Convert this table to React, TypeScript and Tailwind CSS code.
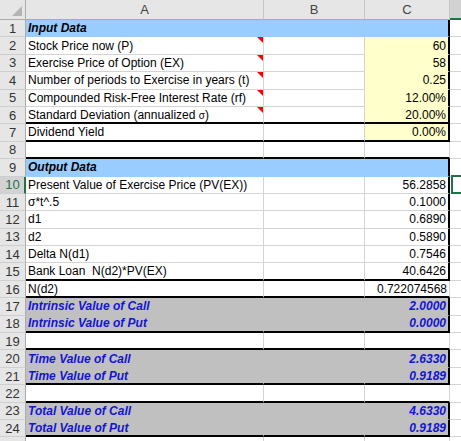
import React from "react";

type Kind = "title" | "input" | "plain" | "result" | "blank";

interface SheetRow {
  n: number;
  label?: React.ReactNode;
  value?: string;
  kind: Kind;
  note?: boolean;
  edge?: boolean; // thick right edge on column C
  rule?: boolean; // thick rule under the row
  hideNumber?: boolean;
}

const rows: SheetRow[] = [
  { n: 1, label: "Input Data", kind: "title", edge: true },
  { n: 2, label: "Stock Price now (P)", value: "60", kind: "input", note: true, edge: true },
  { n: 3, label: "Exercise Price of Option (EX)", value: "58", kind: "input", note: true, edge: true },
  { n: 4, label: "Number of periods to Exercise in years (t)", value: "0.25", kind: "input", note: true, edge: true },
  { n: 5, label: "Compounded Risk-Free Interest Rate (rf)", value: "12.00%", kind: "input", note: true, edge: true },
  {
    n: 6,
    label: (
      <>
        Standard Deviation (annualized <span className="text-[10px]">σ</span>)
      </>
    ),
    value: "20.00%",
    kind: "input",
    note: true,
    edge: true,
    rule: true,
  },
  { n: 7, label: "Dividend Yield", value: "0.00%", kind: "input", edge: true, rule: true },
  { n: 8, kind: "blank", rule: true },
  { n: 9, label: "Output Data", kind: "title", edge: true },
  { n: 10, label: "Present Value of Exercise Price (PV(EX))", value: "56.2858", kind: "plain", edge: true },
  { n: 11, label: "σ*t^.5", value: "0.1000", kind: "plain", edge: true },
  { n: 12, label: "d1", value: "0.6890", kind: "plain", edge: true },
  { n: 13, label: "d2", value: "0.5890", kind: "plain", edge: true },
  { n: 14, label: "Delta N(d1)", value: "0.7546", kind: "plain", edge: true },
  { n: 15, label: "Bank Loan  N(d2)*PV(EX)", value: "40.6426", kind: "plain", edge: true, rule: true },
  { n: 16, label: "N(d2)", value: "0.722074568", kind: "plain", rule: true },
  { n: 17, label: "Intrinsic Value of Call", value: "2.0000", kind: "result", edge: true },
  { n: 18, label: "Intrinsic Value of Put", value: "0.0000", kind: "result", edge: true, rule: true },
  { n: 19, kind: "blank", rule: true },
  { n: 20, label: "Time Value of Call", value: "2.6330", kind: "result", edge: true },
  { n: 21, label: "Time Value of Put", value: "0.9189", kind: "result", edge: true, rule: true },
  { n: 22, kind: "blank", rule: true },
  { n: 23, label: "Total Value of Call", value: "4.6330", kind: "result", edge: true },
  { n: 24, label: "Total Value of Put", value: "0.9189", kind: "result", edge: true, rule: true },
  { n: 25, kind: "blank", hideNumber: true },
];

const cols = "grid grid-cols-[26px_238px_101px_85px_11px]";

function fill(kind: Kind, isC: boolean) {
  if (kind === "title") return "bg-[#99ccff] border-transparent";
  if (kind === "result") return "bg-[#c0c0c0] border-transparent";
  if (kind === "input" && isC) return "bg-[#ffffcc] border-transparent";
  return "bg-white border-[#d4d4d4]";
}

function SheetRowView({ row }: { row: SheetRow }) {
  const selected = row.n === 10;
  const rule = row.rule ? "border-b-2 border-b-black" : "";
  const text =
    row.kind === "title"
      ? "font-bold italic text-black"
      : row.kind === "result"
        ? "font-bold italic text-[#1414d4]"
        : "text-black";

  return (
    <div className={`${cols} h-[17.4px]`}>
      <div
        className={
          selected
            ? "flex items-center justify-center border-b border-r-2 border-b-[#cfcfcf] border-r-[#217346] bg-[#d2d2d2] pl-px text-[13px] text-[#217346]"
            : "flex items-center justify-center border-b border-r border-b-[#cfcfcf] border-r-[#ababab] bg-[#e6e6e6] text-[13px] text-[#333]"
        }
      >
        {row.hideNumber ? null : row.n}
      </div>
      <div
        className={`relative flex items-center whitespace-pre border-b border-r pl-[2px] ${fill(row.kind, false)} ${rule} ${text}`}
      >
        <span className="relative z-10">{row.label}</span>
        {row.note && (
          <span className="absolute right-0 top-0 h-0 w-0 border-l-[6px] border-t-[6px] border-l-transparent border-t-[#ff0000]" />
        )}
      </div>
      <div className={`border-b border-r ${fill(row.kind, false)} ${rule}`} />
      <div
        className={`flex items-center justify-end border-b pr-[2px] ${fill(row.kind, true)} ${rule} ${
          row.edge ? "border-r-2 border-r-black" : "border-r"
        } ${text}`}
      >
        {row.value}
      </div>
      <div className="relative border-b border-[#d4d4d4] bg-white">
        {selected && (
          <div className="absolute -top-[2px] left-[1px] h-[19px] w-[20px] border-2 border-[#217346]" />
        )}
      </div>
    </div>
  );
}

export default function App() {
  return (
    <div
      className="h-[441px] w-[461px] overflow-hidden bg-white text-[12px] leading-none"
      style={{ fontFamily: '"Liberation Sans", Arial, sans-serif' }}
    >
      <div className={`${cols} h-[20px] text-[13px] text-[#444]`}>
        <div className="relative border-b border-r border-[#ababab] bg-[#e6e6e6]">
          <svg className="absolute bottom-[3px] right-[3px]" width="10" height="10" viewBox="0 0 10 10">
            <polygon points="10,0 10,10 0,10" fill="#b4b4b4" />
          </svg>
        </div>
        <div className="flex items-center justify-center border-b border-r border-b-[#ababab] border-r-[#c6c6c6] bg-[#e6e6e6]">
          A
        </div>
        <div className="flex items-center justify-center border-b border-r border-b-[#ababab] border-r-[#c6c6c6] bg-[#e6e6e6]">
          B
        </div>
        <div className="flex items-center justify-center border-b border-r border-b-[#ababab] border-r-[#c6c6c6] bg-[#e6e6e6]">
          C
        </div>
        <div className="border-b-2 border-b-[#217346] bg-[#d2d2d2]" />
      </div>
      {rows.map((row) => (
        <SheetRowView key={row.n} row={row} />
      ))}
    </div>
  );
}
